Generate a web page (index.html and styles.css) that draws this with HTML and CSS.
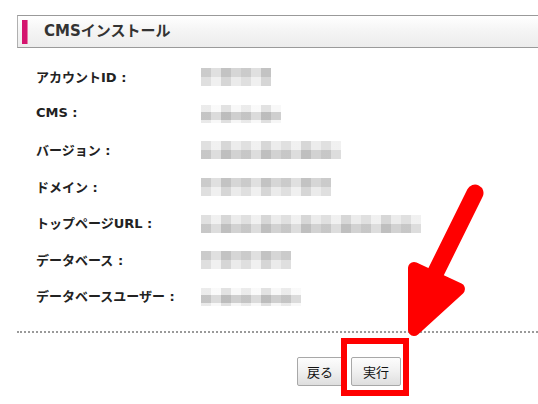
FILE: index.html
```html
<!DOCTYPE html>
<html lang="ja">
  <head>
    <meta charset="UTF-8" />
    <title>CMSインストール</title>
    <link rel="stylesheet" href="styles.css">
  </head>
  <body>
    <div class="page">
      <h2 class="section-title">CMSインストール</h2>

      <table class="info-table">
        <tr>
          <th>アカウントID :</th>
          <td><span class="mosaic top" style="width: 70px"></span></td>
        </tr>
        <tr>
          <th>CMS :</th>
          <td><span class="mosaic thin" style="width: 80px"></span></td>
        </tr>
        <tr>
          <th>バージョン :</th>
          <td><span class="mosaic bottom" style="width: 140px"></span></td>
        </tr>
        <tr>
          <th>ドメイン :</th>
          <td><span class="mosaic top" style="width: 130px"></span></td>
        </tr>
        <tr>
          <th>トップページURL :</th>
          <td><span class="mosaic bottom" style="width: 220px"></span></td>
        </tr>
        <tr>
          <th>データベース :</th>
          <td><span class="mosaic top" style="width: 90px"></span></td>
        </tr>
        <tr>
          <th>データベースユーザー :</th>
          <td><span class="mosaic thin" style="width: 100px"></span></td>
        </tr>
      </table>

      <div class="divider"></div>

      <div class="actions">
        <button type="button" class="btn">戻る</button>
        <button type="button" class="btn">実行</button>
      </div>

      <!-- annotation drawn over the screenshot -->
      <svg class="annotation" width="538" height="404" viewBox="0 0 538 404">
        <rect x="344" y="341" width="62" height="52" fill="none" stroke="#ff0000" stroke-width="6" />
        <line x1="475" y1="193" x2="430" y2="284" stroke="#ff0000" stroke-width="17" stroke-linecap="round" />
        <polygon points="414,268 459,289 414,330" fill="#ff0000" stroke="#ff0000" stroke-width="12" stroke-linejoin="round" />
      </svg>
    </div>
  </body>
</html>
```

FILE: styles.css
```css
/* Global Styles */
* {
  box-sizing: border-box;
  margin: 0;
  padding: 0;
}
body {
  font-family: "DejaVu Sans", "Noto Sans CJK JP", sans-serif;
  background: #fff;
  color: #222;
}
.page {
  position: relative;
  width: 538px;
  height: 404px;
  overflow: hidden;
  padding-top: 15px;
}
/* Section Title */
.section-title {
  position: relative;
  margin-left: 17px;
  height: 33px;
  padding-left: 26px;
  border-top: 1px solid #9a9a9a;
  border-bottom: 1px solid #9a9a9a;
  border-left: 1px solid #b0b0b0;
  background: linear-gradient(to bottom, #ffffff 0%, #f6f6f6 40%, #ececec 100%);
  font-size: 15px;
  font-weight: bold;
  line-height: 31px;
  color: #333;
}
.section-title::before {
  content: "";
  position: absolute;
  left: 4px;
  top: 4px;
  width: 5px;
  height: 24px;
  background: #d4146e;
  border-right: 1px solid #e87aa8;
}
/* Info Table */
.info-table {
  margin: 10px 0 0 36px;
  border-collapse: collapse;
}
.info-table th,
.info-table td {
  height: 36.6px;
  vertical-align: middle;
  text-align: left;
}
.info-table th {
  width: 165px;
  font-size: 13px;
  font-weight: bold;
  color: #222;
  white-space: nowrap;
}
.info-table td {
  padding-top: 2px;
}
.mosaic {
  display: block;
  height: 18px;
  background:
    repeating-linear-gradient(90deg, rgba(0, 0, 0, 0.05) 0 10px, rgba(255, 255, 255, 0.25) 10px 20px, rgba(0, 0, 0, 0.09) 20px 30px, transparent 30px 40px),
    linear-gradient(to bottom, #d6d6d6 0 50%, #ebebeb 50% 100%);
}
.mosaic.bottom {
  background:
    repeating-linear-gradient(90deg, rgba(0, 0, 0, 0.05) 0 10px, rgba(255, 255, 255, 0.25) 10px 20px, rgba(0, 0, 0, 0.09) 20px 30px, transparent 30px 40px),
    linear-gradient(to bottom, #ececec 0 50%, #d2d2d2 50% 100%);
}
.mosaic.thin {
  background:
    repeating-linear-gradient(90deg, rgba(0, 0, 0, 0.05) 0 10px, rgba(255, 255, 255, 0.25) 10px 20px, rgba(0, 0, 0, 0.09) 20px 30px, transparent 30px 40px),
    linear-gradient(to bottom, #f8f8f8 0 40%, #cfcfcf 40% 85%, #f6f6f6 85% 100%);
}
/* Divider */
.divider {
  margin: 17px 0 0 17px;
  border-top: 2px dotted #9a9a9a;
}
/* Buttons */
.actions {
  display: flex;
  gap: 8px;
  padding: 24px 0 0 297px;
}
.btn {
  height: 29px;
  padding: 0 9px;
  border: 1px solid #a8a8a8;
  border-radius: 2px;
  background: linear-gradient(to bottom, #fdfdfd 0%, #f0f0f0 50%, #dedede 100%);
  font-family: "Noto Sans CJK JP", sans-serif;
  font-size: 13px;
  color: #111;
  cursor: pointer;
}
.btn + .btn {
  padding: 0 11px;
}
/* Annotation overlay */
.annotation {
  position: absolute;
  top: 0;
  left: 0;
  pointer-events: none;
}
```
